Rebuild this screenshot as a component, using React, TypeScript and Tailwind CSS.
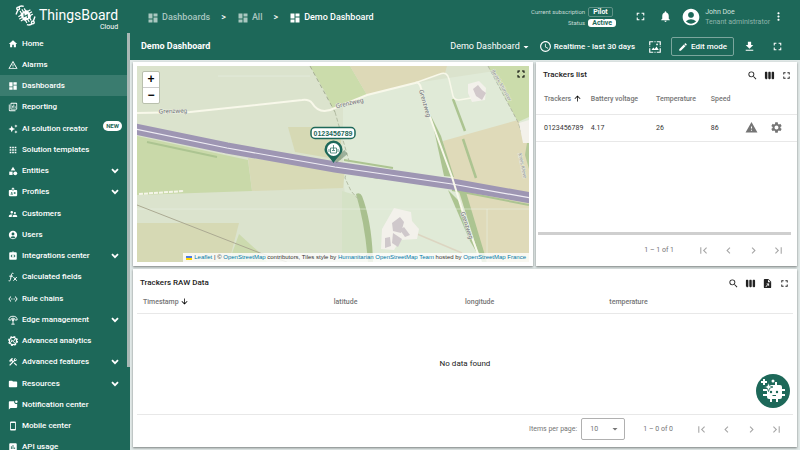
import type { ReactNode } from "react";
import {
  MdAccountCircle,
  MdApps,
  MdArrowDownward,
  MdArrowDropDown,
  MdArrowUpward,
  MdBadge,
  MdCategory,
  MdChevronLeft,
  MdChevronRight,
  MdConstruction,
  MdDashboard,
  MdEdit,
  MdFileDownload,
  MdFirstPage,
  MdFolder,
  MdFullscreen,
  MdHome,
  MdInsertChart,
  MdIntegrationInstructions,
  MdLastPage,
  MdMoreVert,
  MdNotifications,
  MdSchedule,
  MdSearch,
  MdSettings,
  MdSettingsEthernet,
  MdSmartphone,
  MdSupervisorAccount,
  MdViewWeek,
  MdWarning,
  MdWarningAmber,
} from "react-icons/md";

const ReportIcon = () => (
  <svg viewBox="0 0 24 24" className="size-[10px]" fill="currentColor">
    <path d="M2 6h2v14h14v2H4a2 2 0 0 1-2-2z" />
    <path
      fillRule="evenodd"
      d="M8 2h12a2 2 0 0 1 2 2v12a2 2 0 0 1-2 2H8a2 2 0 0 1-2-2V4a2 2 0 0 1 2-2zm0 2v12h12V4zm1.500 5h2v5h-2zm3.500-3h2v8h-2zm3.500 4.500h2V14h-2z"
    />
  </svg>
);

const SparkIcon = () => (
  <svg viewBox="0 0 24 24" className="size-[10px]" fill="currentColor">
    <path d="M9 4l2.500 5.500L17 12l-5.500 2.500L9 20l-2.500-5.500L1 12l5.500-2.500z" />
    <path d="M19 1l1.200 2.800L23 5l-2.800 1.200L19 9l-1.200-2.800L15 5l2.800-1.200zM19 15l1.200 2.800L23 19l-2.800 1.200L19 23l-1.200-2.800L15 19l2.800-1.200z" />
  </svg>
);

const FunctionIcon = () => (
  <svg viewBox="0 0 24 24" className="size-[10px]" fill="none" stroke="currentColor" strokeWidth="2.400">
    <path d="M13 3.500c-3-1.500-4.500.5-5 3.500L6 18c-.5 3-2 4-4.500 3M3 10h9M13 12l8 9M21 12l-8 9" />
  </svg>
);

const EdgeIcon = () => (
  <svg viewBox="0 0 24 24" className="size-[10px]" fill="none" stroke="currentColor" strokeWidth="2.200">
    <path d="M2 12a10 9 0 0 1 20 0M6.500 13a5.500 5.500 0 0 1 11 0M2 12h4M18 12h4M12 12v10M8 22h8" />
    <circle cx="12" cy="12" r="2" fill="currentColor" />
  </svg>
);

const AnalyticsIcon = () => (
  <svg viewBox="0 0 24 24" className="size-[10px]" fill="none" stroke="currentColor">
    <circle cx="12" cy="12" r="8.500" strokeWidth="3" />
    <circle cx="12" cy="12" r="10.500" strokeWidth="3" strokeDasharray="4.500 3.750" />
    <path d="M6 16l4-5 3 2 4-6M7 9l3 2M13 13l3 4" strokeWidth="2.400" />
  </svg>
);

const MessageIcon = () => (
  <svg viewBox="0 0 24 24" className="size-[10px]" fill="currentColor">
    <path d="M4 3h11a5 5 0 0 0 7 6v8a2 2 0 0 1-2 2H6l-4 4V5a2 2 0 0 1 2-2z" />
    <circle cx="20" cy="4" r="3" />
  </svg>
);

const ImageFrameIcon = () => (
  <svg viewBox="0 0 24 24" className="size-[14px]" fill="none" stroke="currentColor" strokeWidth="2">
    <path d="M9 3H3v6M15 3h6v6M3 14v7h6M21 14v7h-6M11 3h2M11 21h2M3 11v1M21 11v1" />
    <path d="M6 17l3-4 2.500 2.500L14.500 11l4 6z" fill="currentColor" stroke="none" />
    <circle cx="15.500" cy="7.500" r="1.500" fill="currentColor" stroke="none" />
  </svg>
);

const FileExportIcon = () => (
  <svg viewBox="0 0 24 24" className="size-[11px]" fill="currentColor">
    <path
      fillRule="evenodd"
      d="M6 2h8l6 6v12a2 2 0 0 1-2 2H6a2 2 0 0 1-2-2V4a2 2 0 0 1 2-2zm7 1.500V9h5.500zM8.900 19.400l5-5v3.100h1.600V12H10v1.500h2.600l-5 5z"
    />
  </svg>
);

type Item = { label: string; icon: ReactNode; expandable?: boolean; badge?: string; active?: boolean };

const menu: Item[][] = [
  [
    { label: "Home", icon: <MdHome /> },
    { label: "Alarms", icon: <MdWarningAmber /> },
    { label: "Dashboards", icon: <MdDashboard />, active: true },
    { label: "Reporting", icon: <ReportIcon /> },
  ],
  [
    { label: "AI solution creator", icon: <SparkIcon />, badge: "NEW" },
    { label: "Solution templates", icon: <MdApps /> },
    { label: "Entities", icon: <MdCategory />, expandable: true },
    { label: "Profiles", icon: <MdBadge />, expandable: true },
  ],
  [
    { label: "Customers", icon: <MdSupervisorAccount /> },
    { label: "Users", icon: <MdAccountCircle /> },
    { label: "Integrations center", icon: <MdIntegrationInstructions />, expandable: true },
    { label: "Calculated fields", icon: <FunctionIcon /> },
  ],
  [
    { label: "Rule chains", icon: <MdSettingsEthernet /> },
    { label: "Edge management", icon: <EdgeIcon />, expandable: true },
    { label: "Advanced analytics", icon: <AnalyticsIcon /> },
    { label: "Advanced features", icon: <MdConstruction />, expandable: true },
  ],
  [
    { label: "Resources", icon: <MdFolder />, expandable: true },
    { label: "Notification center", icon: <MessageIcon /> },
    { label: "Mobile center", icon: <MdSmartphone /> },
    { label: "API usage", icon: <MdInsertChart /> },
  ],
];

const Logo = () => (
  <div className="flex h-[33px] shrink-0 items-start pl-[15px] pt-[5px] text-white">
    <svg viewBox="0 0 60 60" className="size-[21px] shrink-0" fill="none" stroke="currentColor">
      <g transform="rotate(-30 30 30)">
        <rect x="18" y="18" width="25" height="25" rx="7" fill="currentColor" stroke="none" />
        <path
          d="M23 12v7M30 11v8M37 12v7M23 42v7M30 42v8M37 42v7M12 23h7M11 30h8M12 37h7M42 23h7M42 30h8M42 37h7"
          strokeWidth="3.500"
          strokeLinecap="round"
        />
        <path d="M29 23l-4 8h10l-4 8" stroke="#1d6859" strokeWidth="3" />
      </g>
      <path d="M3 27L9 12M9 8C13 3 19 2 25 4M57 33l-5 14M50 52c-4 5-10 6-16 4" strokeWidth="4" />
      <circle cx="9" cy="10" r="4" fill="#1d6859" strokeWidth="4" />
      <circle cx="51" cy="50" r="4" fill="#1d6859" strokeWidth="4" />
    </svg>
    <div className="ml-[3px] flex flex-col items-end pt-[2px]">
      <span className="text-[14px] leading-[16px]">ThingsBoard</span>
      <span className="text-[7px] leading-[8px]">Cloud</span>
    </div>
  </div>
);

const Chevron = () => (
  <svg viewBox="0 0 8 6" className="ml-auto h-[6px] w-[8px]" fill="none" stroke="currentColor" strokeWidth="1.800">
    <path d="M1 1.200l3 3 3-3" />
  </svg>
);

const Sidebar = () => (
  <aside className="flex w-[130px] shrink-0 flex-col overflow-hidden text-white">
    <Logo />
    <div className="flex min-h-0 flex-1">
      <nav className="flex min-w-0 flex-1 flex-col gap-px overflow-hidden">
        {menu.map((group) => (
          <ul key={group[0].label} className="shrink-0">
            {group.map((item) => (
              <li key={item.label}>
                <a
                  href="#"
                  className={`flex h-[21px] items-center whitespace-nowrap px-[8px] text-[8px] font-medium leading-[10px] ${
                    item.active ? "bg-[#3a7c6f]" : ""
                  }`}
                >
                  <span className="mr-[4px] text-[10px]">{item.icon}</span>
                  {item.label}
                  {item.badge && (
                    <span className="-mr-[3px] mb-[5px] ml-auto rounded-full bg-white px-[3px] text-[6px] font-bold text-[#1d6859]">
                      {item.badge}
                    </span>
                  )}
                  {item.expandable && <Chevron />}
                </a>
              </li>
            ))}
          </ul>
        ))}
      </nav>
      <div className="w-[3px]">
        <div className="h-4/5 bg-[#a9b8b5]" />
      </div>
    </div>
  </aside>
);

const TopBar = () => (
  <header className="flex h-[33px] shrink-0 items-center pl-[17px] pr-[15px] text-white">
    <nav className="flex items-center pt-[2px] text-[9px] font-medium">
      <a href="#" className="flex items-center gap-[3px] text-[#a9c7c0]">
        <MdDashboard className="size-[12px]" />
        Dashboards
      </a>
      <span className="mx-[11px]">&gt;</span>
      <a href="#" className="flex items-center gap-[3px] text-[#a9c7c0]">
        <MdDashboard className="size-[12px]" />
        All
      </a>
      <span className="mx-[11px]">&gt;</span>
      <a href="#" className="flex items-center gap-[3px]">
        <MdDashboard className="size-[12px]" />
        Demo Dashboard
      </a>
    </nav>
    <div className="ml-auto grid grid-cols-[auto_28px] items-center gap-x-[3px] gap-y-[2px] text-right text-[7px] leading-[8px]">
      <span className="text-[6px] text-[#c5dad5]">Current subscription</span>
      <span className="justify-self-start rounded-[2px] border border-[#5f9287] px-[4px] font-bold">Pilot</span>
      <span className="text-[6px] text-[#c5dad5]">Status</span>
      <span className="justify-self-start rounded-[3px] bg-white px-[4px] font-bold text-[#1d6859]">Active</span>
    </div>
    <button aria-label="Fullscreen" className="ml-[18px]">
      <MdFullscreen className="size-[13px]" />
    </button>
    <button aria-label="Notifications" className="ml-[12px]">
      <MdNotifications className="size-[13px]" />
    </button>
    <MdAccountCircle className="ml-[9px] size-[20px]" />
    <div className="ml-[4px] text-[7px] leading-[10px]">
      <p className="text-[#d2e1de]">John Doe</p>
      <p className="text-[#8fb4ac]">Tenant administrator</p>
    </div>
    <button aria-label="More" className="ml-[2px]">
      <MdMoreVert className="size-[13px]" />
    </button>
  </header>
);

const Toolbar = () => (
  <div className="flex h-[27px] shrink-0 items-center pl-[11px] pr-[16px] text-[8px] font-medium text-white">
    <h1 className="text-[9px] font-bold">Demo Dashboard</h1>
    <button className="ml-auto flex items-center text-[9px] font-normal">
      Demo Dashboard
      <MdArrowDropDown className="size-[12px]" />
    </button>
    <button className="ml-[7px] flex items-center gap-[2px]">
      <MdSchedule className="size-[13px]" />
      Realtime - last 30 days
    </button>
    <button aria-label="Dashboard image" className="ml-[13px]">
      <ImageFrameIcon />
    </button>
    <button className="ml-[9px] flex h-[19px] items-center gap-[3px] rounded-[2px] border border-[#7ba69d] px-[6px]">
      <MdEdit className="size-[10px]" />
      Edit mode
    </button>
    <button aria-label="Export" className="ml-[9px]">
      <MdFileDownload className="size-[13px]" />
    </button>
    <button aria-label="Fullscreen" className="ml-[15px]">
      <MdFullscreen className="size-[13px]" />
    </button>
  </div>
);

const MapCanvas = () => (
  <svg viewBox="0 0 392 196" preserveAspectRatio="xMidYMid slice" className="block h-full w-full">
    <rect width="392" height="196" fill="#dbe3cd" />
    <path d="M206 32L278 17L392 0V196H215L206 110z" fill="#e0ead7" />
    {/* fields */}
    <path d="M0 70L111 94L115 125L0 129z" fill="#c9d9a9" />
    <path d="M111 92L208 104L206 122L115 125z" fill="#d8dab6" />
    <path d="M151 61H204V94L158 86z" fill="#d6d9b4" />
    <path d="M0 157H102L92 196H0z" fill="#d6d9b4" />
    <path d="M102 168L92 196H130L123 187z" fill="#ccdaae" />
    <path d="M173 0H213L230 29L196 43L188 26z" fill="#cbdcab" />
    <path d="M213 0H310L308 7L278 17L230 29z" fill="#ddd9b7" />
    <path d="M351 0H392V51L381 56z" fill="#cbdcab" />
    <path d="M306 75L381 54L392 77V130L315 113z" fill="#dfdab9" />
    <path d="M321 124L392 137V196H346z" fill="#dfdab9" />
    <path d="M205 125L222 130L233 196H205z" fill="#d5e2c6" />
    {/* hedges */}
    <path d="M294 50L304 70L317 111L307 110z" fill="#acc491" />
    <path d="M311 124L322 135L340 187L333 175z" fill="#acc491" />
    <path d="M321 122L329 126L350 196H344z" fill="#acc491" />
    <path d="M219 128q4-2 6 2q10 26 11 66h-5q-3-38-12-68z" fill="#a9c08f" />
    <path d="M316 33L328 65M326 73L339 112" stroke="#acc491" strokeWidth="2.500" />
    <path d="M207 94L256 102M222 108L241 112M315 124L392 139M10 76L80 91" stroke="#acc491" strokeWidth="2" />
    <path d="M390 77l-2 12 4 14V77z" fill="#b4c998" />
    {/* tile seams */}
    <path d="M0 143H392M350 143V196M81 10H173" stroke="#eaf0e2" strokeWidth=".6" />
    {/* tracks */}
    <path d="M0 139L123 187L150 196" fill="none" stroke="#aba992" />
    <path d="M173 0L198 46" fill="none" stroke="#a5ae93" strokeDasharray="4 3" />
    <path d="M198 46L212 95L208 112L214 125L222 134" fill="none" stroke="#b4bda4" strokeDasharray="4 2" />
    <path d="M351 0L381 56L388 77" fill="none" stroke="#b3b9a3" strokeDasharray="4 2" />
    <path d="M273 165L325 187" stroke="#dcd5c1" strokeWidth="1.500" />
    <path d="M2 128L47 125" stroke="#f5f5e9" strokeWidth="2" strokeDasharray="4 1" />
    <path d="M84 86L196 104" stroke="#ecebe0" strokeWidth="1.500" strokeDasharray="4 2" />
    {/* buildings */}
    <path d="M331 18l11-3 7 7-1 12-13 2-4-9z" fill="#f3f1eb" />
    <path d="M336 23l5-4 4 5 4 3-4 7-6-4z" fill="#d2c9cb" />
    <path d="M382 57l10-3v23h-6z" fill="#f3f1eb" />
    <path d="M245 163l12-21 17 4 1 9 7 8-2 10-17 1-6 10-13-1z" fill="#f3f1eb" />
    <path d="M255 157l8-6 4 5-3 11-8-2zM267 161l6 8-5 2-5-7zM256 167l9 6-4 8-6-4zM248 172l5-1 1 9-6 2z" fill="#cfc8cb" />
    {/* motorway */}
    <path d="M-2 63L90 82L198 101L315 118L394 132" fill="none" stroke="#9e96b3" strokeWidth="11" />
    <path d="M-2 63L90 82L198 101L315 118L394 132" fill="none" stroke="#efedf4" strokeWidth="1.200" />
    {/* roads */}
    <g fill="none" stroke="#f8f8ea" strokeWidth="2">
      <path d="M0 47L53 46L110 40L165 34Q172 33 175 37Q183 50 198 42L230 29L278 17Q282 15 284 22L293 51L315 111L326 147L344 196" />
      <path d="M278 17L303 8Q310 5 312 13L316 30Q317 34 322 34L334 32" strokeWidth="1.500" />
    </g>
    <g
      fontFamily='"Noto Sans", "Open Sans", sans-serif'
      fontSize="6"
      fill="#6a6b74"
      stroke="#e8ecdd"
      strokeWidth="1"
      paintOrder="stroke"
      textAnchor="middle"
    >
      <text x="36" y="47" transform="rotate(-2 36 47)">Grenzweg</text>
      <text x="213" y="39" transform="rotate(-13 213 39)">Grenzweg</text>
      <text x="286" y="38" transform="rotate(74 286 38)">Grenzweg</text>
      <text x="328" y="160" transform="rotate(72 328 160)">Grenzweg</text>
      <text x="363" y="20" transform="rotate(60 363 20)" fill="#8d8f94" fontSize="5">Bezirk Münster</text>
      <text x="384" y="100" transform="rotate(78 384 100)" fill="#8d8f94" fontSize="5">Kreis Kleve</text>
    </g>
    {/* tracker marker */}
    <path d="M198 95l11-9" stroke="#5d7a63" strokeWidth="5" opacity=".5" />
    <path d="M196.500 97C193 91 187.500 88 187.500 83.500a9 9 0 0 1 18 0C205.500 88 200 91 196.500 97z" fill="#1d6859" />
    <circle cx="196.500" cy="83.500" r="6.500" fill="#fff" />
    <path d="M193.500 82h6v5h-6zM196.500 79v5M192 83v3M201 83v3M195 84.500h3" fill="none" stroke="#1d6859" strokeWidth=".7" />
    <rect x="174" y="61.500" width="44" height="11" rx="4" fill="#fff" stroke="#1d6859" strokeWidth="1.500" />
    <text
      x="196"
      y="69.500"
      textAnchor="middle"
      fontFamily='"Liberation Sans", Arial, sans-serif'
      fontSize="7"
      fontWeight="bold"
      fill="#1d6859"
    >
      0123456789
    </text>
  </svg>
);

const MapWidget = () => (
  <section className="min-h-0 min-w-0 bg-white p-[4px] shadow-[0_1px_2px_rgba(0,0,0,0.45)]">
    <div className="relative h-full overflow-hidden">
      <div className="absolute inset-0">
        <MapCanvas />
      </div>
      <div className="absolute left-[5px] top-[5px] flex w-[18px] flex-col rounded-[2px] border border-[#b9c0ad] bg-white font-['Liberation_Sans',Arial,sans-serif] text-[12px] font-bold leading-[15px] text-black">
        <button aria-label="Zoom in" className="h-[16px] border-b border-[#ccc]">+</button>
        <button aria-label="Zoom out" className="h-[15px]">−</button>
      </div>
      <button aria-label="Fullscreen map" className="absolute right-[2px] top-[2px] text-black">
        <MdFullscreen className="size-[12px]" />
      </button>
      <p className="absolute bottom-0 right-0 flex h-[9px] items-center gap-[2px] whitespace-nowrap bg-white/80 px-[3px] font-['Liberation_Sans',Arial,sans-serif] text-[6px] text-[#333]">
        <svg viewBox="0 0 6 4" className="h-[4px] w-[6px]">
          <path fill="#4c7be1" d="M0 0h6v2H0z" />
          <path fill="#ffd500" d="M0 2h6v2H0z" />
        </svg>
        <span>
          <a href="#" className="text-[#0078a8]">Leaflet</a> | ©{" "}
          <a href="#" className="text-[#0078a8]">OpenStreetMap</a> contributors, Tiles style by{" "}
          <a href="#" className="text-[#0078a8]">Humanitarian OpenStreetMap Team</a> hosted by{" "}
          <a href="#" className="text-[#0078a8]">OpenStreetMap France</a>
        </span>
      </p>
    </div>
  </section>
);

const Pager = () => (
  <div className="flex gap-[12px] text-[13px] text-[#a6a6a6]">
    <button aria-label="First page"><MdFirstPage /></button>
    <button aria-label="Previous page"><MdChevronLeft /></button>
    <button aria-label="Next page"><MdChevronRight /></button>
    <button aria-label="Last page"><MdLastPage /></button>
  </div>
);

const TrackersList = () => (
  <section className="flex min-h-0 min-w-0 flex-col bg-white shadow-[0_1px_2px_rgba(0,0,0,0.45)]">
    <div className="flex h-[25px] items-center pl-[7px] pr-[5px] pt-px text-[#222]">
      <h2 className="text-[8px] font-medium">Trackers list</h2>
      <div className="ml-auto flex gap-[6px] text-[11px]">
        <button aria-label="Search"><MdSearch /></button>
        <button aria-label="Columns"><MdViewWeek /></button>
        <button aria-label="Fullscreen"><MdFullscreen /></button>
      </div>
    </div>
    <table className="w-full table-fixed text-left text-[7px] leading-[10px] text-[#333]">
      <colgroup>
        <col className="w-[21%]" />
        <col className="w-[25%]" />
        <col className="w-[21%]" />
        <col className="w-[11%]" />
        <col />
      </colgroup>
      <thead>
        <tr className="h-[27px] border-b border-[#e8e8e8] text-[#757575]">
          <th className="whitespace-nowrap pb-[3px] pl-[8px] font-medium">
            Trackers <MdArrowUpward className="inline size-[9px] text-black" />
          </th>
          <th className="pb-[3px] font-medium">Battery voltage</th>
          <th className="pb-[3px] font-medium">Temperature</th>
          <th className="pb-[3px] font-medium">Speed</th>
          <th />
        </tr>
      </thead>
      <tbody>
        <tr className="h-[27px] border-b border-[#e8e8e8]">
          <td className="pl-[8px]">0123456789</td>
          <td>4.17</td>
          <td>26</td>
          <td>86</td>
          <td>
            <div className="flex justify-end gap-[12px] pr-[14px] text-[13px] text-[#757575]">
              <button aria-label="Alarms"><MdWarning /></button>
              <button aria-label="Settings"><MdSettings /></button>
            </div>
          </td>
        </tr>
      </tbody>
    </table>
    <div className="mb-[2px] ml-[2px] mr-[6px] mt-auto h-[3px] bg-[#cfcfcf]" />
    <div className="flex h-[29px] items-center justify-end gap-[23px] pb-[2px] pr-[12px] text-[7px] text-[#757575]">
      1 – 1 of 1
      <Pager />
    </div>
  </section>
);

const RawData = () => (
  <section className="col-span-2 flex min-h-0 flex-col bg-white shadow-[0_1px_2px_rgba(0,0,0,0.45)]">
    <div className="flex h-[25px] items-center pl-[7px] pr-[7px] pt-[3px] text-[#222]">
      <h2 className="text-[8px] font-medium">Trackers RAW Data</h2>
      <div className="ml-auto flex items-center gap-[6px] pt-px text-[11px]">
        <button aria-label="Search"><MdSearch /></button>
        <button aria-label="Columns"><MdViewWeek /></button>
        <button aria-label="Export"><FileExportIcon /></button>
        <button aria-label="Fullscreen"><MdFullscreen /></button>
      </div>
    </div>
    <table className="mx-[4px] table-fixed text-left text-[7px] leading-[10px] text-[#757575]">
      <colgroup>
        <col className="w-[30%]" />
        <col className="w-[20%]" />
        <col className="w-[22%]" />
        <col />
      </colgroup>
      <thead>
        <tr className="h-[19px] border-b border-[#e8e8e8]">
          <th className="pb-[3px] pl-[6px] font-medium">
            Timestamp <MdArrowDownward className="inline size-[9px] text-black" />
          </th>
          <th className="pb-[3px] font-medium">latitude</th>
          <th className="pb-[3px] font-medium">longitude</th>
          <th className="pb-[3px] font-medium">temperature</th>
        </tr>
      </thead>
    </table>
    <p className="flex flex-1 items-center justify-center text-[8px] text-[#222]">No data found</p>
    <div className="mx-[4px] flex h-[33px] items-center justify-end border-t border-[#e8e8e8] pb-[4px] pr-[10px] text-[7px] text-[#757575]">
      <label htmlFor="page-size">Items per page:</label>
      <div className="relative ml-[4px] mr-[18px]">
        <select id="page-size" className="h-[22px] w-[44px] appearance-none rounded-[2px] border border-[#b0b0b0] pl-[8px]">
          <option>10</option>
        </select>
        <MdArrowDropDown className="pointer-events-none absolute right-[4px] top-[5px] size-[12px]" />
      </div>
      <span className="mr-[22px]">1 – 0 of 0</span>
      <Pager />
    </div>
  </section>
);

const Assistant = () => (
  <button
    aria-label="AI assistant"
    className="absolute bottom-[42px] right-[10px] size-[34px] rounded-full bg-[#1d6859]"
  >
    <svg viewBox="0 0 34 34" fill="none" stroke="#fff">
      <path d="M13 11h11a2 2 0 0 1 2 2v10a2 2 0 0 1-2 2H13a2 2 0 0 1-2-2V13a2 2 0 0 1 2-2z" fill="#fff" stroke="none" />
      <path d="M20 8v4M15 24v4M21 24v4M7 16h5M7 21h5M25 16h4M25 21h4" strokeWidth="2" />
      <path d="M8 5v6M5 8h6" strokeWidth="2" />
      <circle cx="17" cy="7" r="1.500" fill="#fff" stroke="none" />
      <path d="M12.500 8.500l1.200 3.300 3.300 1.200-3.300 1.200-1.200 3.300-1.200-3.300L8 13l3.300-1.200z" fill="#fff" stroke="#1d6859" strokeWidth=".8" />
      <circle cx="15" cy="18" r="1.200" fill="#1d6859" stroke="none" />
      <circle cx="21" cy="18" r="1.200" fill="#1d6859" stroke="none" />
      <path d="M16.500 21.500h3.500" stroke="#1d6859" />
    </svg>
  </button>
);

const App = () => {
  return (
    <div className="relative flex h-screen overflow-hidden bg-[#1d6859] font-[Roboto,sans-serif]">
      <Sidebar />
      <div className="flex min-w-0 flex-1 flex-col">
        <TopBar />
        <Toolbar />
        <main className="grid min-h-0 flex-1 grid-cols-[400fr_261fr] grid-rows-[204fr_178fr] gap-[3px] bg-[#e0e8e7] px-[3px] pb-[3px] pt-[2px]">
          <MapWidget />
          <TrackersList />
          <RawData />
        </main>
      </div>
      <Assistant />
    </div>
  );
};

export default App;
